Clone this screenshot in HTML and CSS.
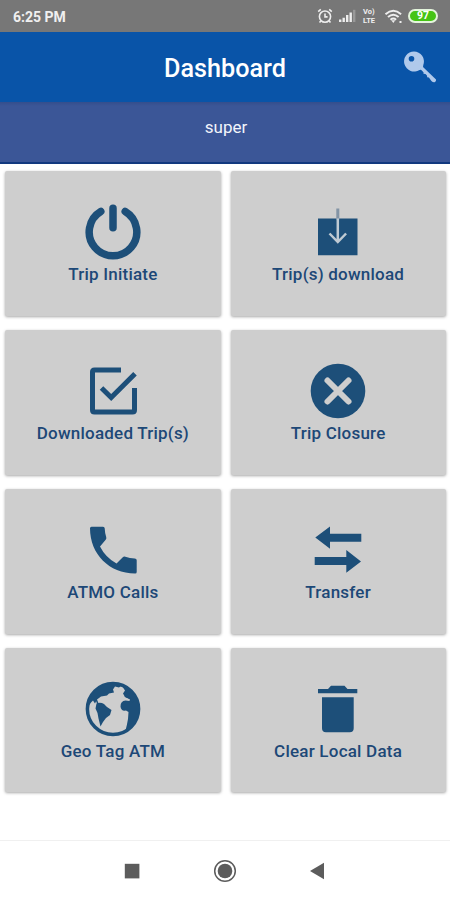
FILE: index.html
```
<!DOCTYPE html>
<html lang="en">
<head>
  <meta charset="UTF-8" />
  <meta name="viewport" content="width=device-width, initial-scale=1.0"/>
  <title>Dashboard</title>
  <link rel="stylesheet" href="styles.css">
</head>
<body>
  <div class="status-bar">
    <span class="time">6:25 PM</span>
    <div class="status-icons">
      <svg class="alarm" width="16" height="16" viewBox="0 0 16 16">
        <circle cx="8" cy="8.6" r="5.6"/>
        <path d="M8 5.5v3.4h2.6M1.2 3.6l2.6-2.2M14.8 3.6l-2.6-2.2M3.8 13l-1.3 1.6M12.2 13l1.3 1.6"/>
      </svg>
      <svg class="signal" width="17" height="14" viewBox="0 0 17 14">
        <path d="M0 10.5h2.4V13H0zM3.5 8.7h2.4V13H3.5zM7 6h2.4v7H7zM10.5 3.5h2.4V13h-2.4z"/>
        <path class="faint" d="M14 .8h2.4V13H14z"/>
      </svg>
      <div class="volte"><span>Vo)</span><span>LTE</span></div>
      <svg class="wifi" width="20" height="15" viewBox="0 0 20 15">
        <path d="M1.5 5.2q7.8-6.8 15.6 0M4 8q5.3-4.6 10.6 0M6.5 10.7q2.8-2.4 5.6 0"/>
        <path class="dot" d="M7.3 11.3h4L9.3 14zM15.5 12h2v2h-2z"/>
      </svg>
      <div class="battery">97</div>
    </div>
  </div>

  <div class="app-bar">
    <h1>Dashboard</h1>
    <svg class="key" width="34" height="34" viewBox="0 0 34 34">
      <path fill-rule="evenodd" d="M12 1.5a10 10 0 1 0 5.5 18.4l1.5-.2 2.5 2.5v1.600l2 .2 1.600 1.800v1.500l1.800.3 2.500 3.500q1.500 1.500 3.200 1.200 1.700-.8 1.400-2.800L21 17l.3-2A10 10 0 0 0 12 1.500zM9.500 6a2.800 2.800 0 1 1 0 5.600 2.800 2.800 0 0 1 0-5.600z"/>
    </svg>
  </div>

  <div class="user-bar">super</div>

  <div class="menu">
    <div class="card">
      <svg class="icon" viewBox="0 0 56 56">
        <path class="line round" d="M15.8 7.5a23.8 23.8 0 1 0 24.4 0M28 4.2v19.6"/>
      </svg>
      <span>Trip Initiate</span>
    </div>
    <div class="card">
      <svg class="icon" viewBox="0 0 56 56">
        <path d="M8 14.5h39.5v36.7H8z"/>
        <path class="stem" d="M27.8 4.5v11"/>
        <path class="arrow" d="M27.8 14.5V38M19.5 29.5l8.3 8.500 8.300-8.500"/>
      </svg>
      <span>Trip(s) download</span>
    </div>
    <div class="card">
      <svg class="icon" viewBox="0 0 56 56">
        <path class="line thin" d="M36 7H9.5q-2 0-2 2v38q0 2 2 2h38q2 0 2-2V25M16.5 25l9.700 9.500L50 10.700"/>
      </svg>
      <span>Downloaded Trip(s)</span>
    </div>
    <div class="card">
      <svg class="icon" viewBox="0 0 56 56">
        <circle cx="28" cy="28" r="27.3"/>
        <path class="cross" d="M17.500 17.500l21 21M38.500 17.500l-21 21"/>
      </svg>
      <span>Trip Closure</span>
    </div>
    <div class="card">
      <svg class="icon" viewBox="0 0 56 56">
        <path d="M6.500 4.700H18q1.600 0 1.700 1.500.2 5 1.500 8.800.5 1.800-.5 2.800L15 24.500Q20.500 35.500 31.500 41.500l6.300-6.300q1-1 2.500-.5 4.500 1.500 9.400 1.700 2 .1 2 1.800V50q0 1.500-1.500 1.500C24 51.300 5 32 5 6.200q0-1.500 1.500-1.500z"/>
      </svg>
      <span>ATMO Calls</span>
    </div>
    <div class="card">
      <svg class="icon" viewBox="0 0 56 56">
        <path d="M5.3 15.5L20 4.4v7.3h31.3v8H20v7zM4.700 35h31.600v-7L51 39.400 36.300 50.700V43H4.700z"/>
      </svg>
      <span>Transfer</span>
    </div>
    <div class="card">
      <svg class="icon" viewBox="0 0 56 56">
        <circle class="globe" cx="28" cy="28" r="25.6"/>
        <path d="M7 14Q14 3 28 2.500l8 2.500-2 1.500-4-1-2 3 1 3-5 1-2 2-6 1-4 3-2 4-2-3-2 2-2 3-3 5Q2 20 7 14z"/>
        <path d="M34 4Q47 8 50 17l3 6q3 13-5 22-4 4-7.500 4.500Q42 44 43 38l.5-7-2.500-1.500q-5 1-5.500-4 0-5.500 5-6l4 .5.500-2-5-2-2-3.500 2-3-2-3z"/>
        <path d="M11.5 22.500q4-1.500 7.500.5l3 3 4.500 3-1.500 5-4 3-3 4-2.500 4.500-2-8-1-5.500-2-4.500z"/>
        <path class="coast" d="M11 18l2 5M40 15l6 3 2 3"/>
      </svg>
      <span>Geo Tag ATM</span>
    </div>
    <div class="card">
      <svg class="icon" viewBox="0 0 56 56">
        <path d="M8 8h10l3-3.300h13.500l3 3.300h9.800v4.300H8zM12 16.300h31.700v31q0 4-4 4H16q-4 0-4-4z"/>
      </svg>
      <span>Clear Local Data</span>
    </div>
  </div>

  <div class="nav-bar">
    <svg width="24" height="24" viewBox="0 0 24 24"><path d="M4.800 4.800h14.600v14.600H4.800z"/></svg>
    <svg width="24" height="24" viewBox="0 0 24 24"><circle class="ring" cx="12" cy="12" r="10.300"/><circle cx="12" cy="12" r="7.300"/></svg>
    <svg width="24" height="24" viewBox="0 0 24 24"><path d="M4 12l14-8.200v16.400z"/></svg>
  </div>
</body>
</html>
```
FILE: styles.css
```
* {
  margin: 0;
  padding: 0;
  box-sizing: border-box;
}

body {
  font-family: Roboto, "Liberation Sans", sans-serif;
  background: #fff;
  width: 450px;
  height: 900px;
  display: flex;
  flex-direction: column;
  overflow: hidden;
}

.status-bar {
  height: 32px;
  flex-shrink: 0;
  background: #777;
  color: #f0f0f0;
  display: flex;
  align-items: center;
  justify-content: space-between;
  padding: 0 12px 0 13px;
}

.time {
  font-size: 14px;
  font-weight: 700;
  padding-top: 2px;
}

.status-icons {
  display: flex;
  align-items: center;
}

.alarm {
  fill: none;
  stroke: #eee;
  stroke-width: 1.6;
  margin-right: 6px;
}

.signal {
  fill: #eee;
  margin-right: 7px;
}

.signal .faint {
  fill: #999;
}

.volte {
  width: 15px;
  display: flex;
  flex-direction: column;
  font-size: 7.5px;
  line-height: 9px;
  font-weight: 700;
  margin-right: 6px;
}

.wifi {
  fill: none;
  stroke: #eee;
  stroke-width: 2;
  margin-right: 4px;
}

.wifi .dot {
  fill: #eee;
  stroke: none;
}

.battery {
  width: 30px;
  height: 14px;
  border: 2px solid #e4f5dc;
  border-radius: 7px;
  background: #45c414;
  color: #fff;
  font-size: 10.5px;
  line-height: 10px;
  font-weight: 700;
  text-align: center;
}

.app-bar {
  height: 70px;
  flex-shrink: 0;
  background: #0954a8;
  color: #fff;
  display: grid;
  grid-template-columns: 1fr auto 1fr;
  align-items: center;
  padding: 0 14px;
}

.app-bar h1 {
  grid-column: 2;
  font-size: 25.2px;
  font-weight: 500;
  padding-top: 3px;
}

.key {
  fill: #b0c9eb;
  justify-self: end;
}

.user-bar {
  height: 62px;
  flex-shrink: 0;
  background: linear-gradient(#344e8c, #3b5697 4px);
  border-bottom: 2px solid #12397f;
  color: #f2f5fb;
  font-size: 17px;
  line-height: 20px;
  text-align: center;
  padding: 15px 0 0 2px;
}

.menu {
  flex: 1;
  display: grid;
  grid-template-columns: 1fr 1fr;
  grid-auto-rows: 144.6px;
  gap: 14.2px 10px;
  padding: 7.4px 4.3px 0 5.3px;
}

.card {
  background: #cecece;
  border-radius: 2px;
  box-shadow: 0 1px 3px rgba(0, 0, 0, 0.35);
  display: flex;
  flex-direction: column;
  align-items: center;
  padding-top: 33px;
  color: #1d4877;
  font-size: 17px;
  line-height: 28px;
  letter-spacing: 0.22px;
  font-weight: 500;
}

.icon {
  width: 56px;
  height: 56px;
  flex-shrink: 0;
  fill: #1d4f79;
}

.line {
  fill: none;
  stroke: #1d4f79;
  stroke-width: 7.5;
}

.round {
  stroke-linecap: round;
}

.thin {
  stroke-width: 5;
}

.stem {
  stroke: #8394a5;
  stroke-width: 3;
}

.arrow {
  fill: none;
  stroke: #bfcad3;
  stroke-width: 2.5;
}

.cross {
  stroke: #cecece;
  stroke-width: 6;
  stroke-linecap: round;
}

.globe {
  fill: none;
  stroke: #1d4f79;
  stroke-width: 3.5;
}

.coast {
  fill: none;
  stroke: #1d4f79;
  stroke-width: 1.5;
}

.nav-bar {
  height: 60px;
  flex-shrink: 0;
  border-top: 1px solid #f0f0f0;
  display: flex;
  align-items: center;
  justify-content: center;
  gap: 69px;
  fill: #5c5c5c;
}

.ring {
  fill: none;
  stroke: #5c5c5c;
  stroke-width: 1.5;
}
```
